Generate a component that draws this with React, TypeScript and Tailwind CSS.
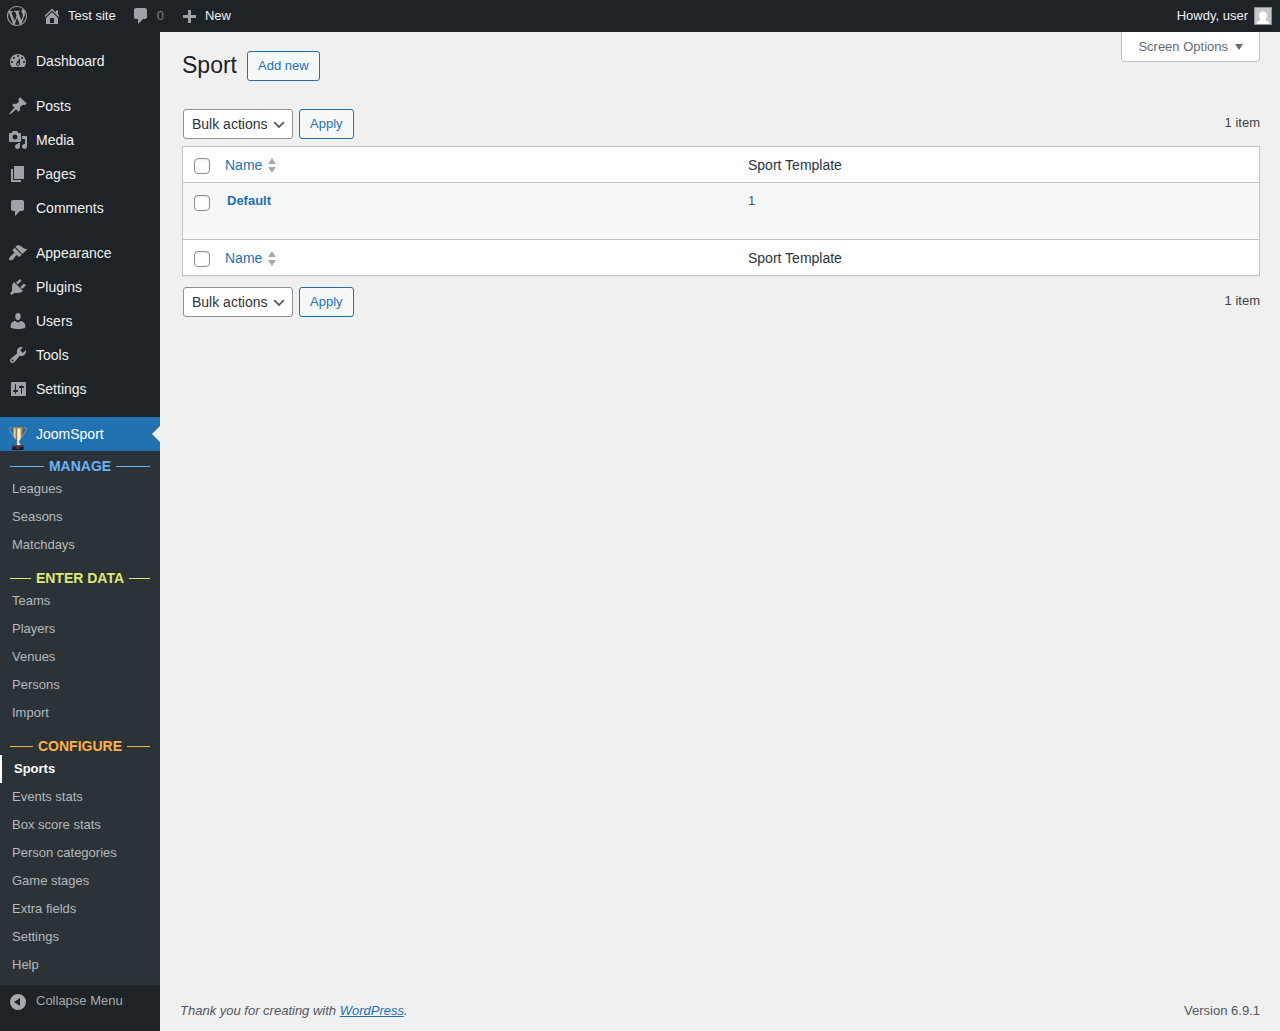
import type { ReactNode } from 'react';

const icons = {
  wordpress:
    'M20 10c0-5.51-4.49-10-10-10C4.48 0 0 4.49 0 10c0 5.52 4.48 10 10 10 5.51 0 10-4.48 10-10zM7.78 15.37L4.37 6.22c.55-.02 1.17-.08 1.17-.08.5-.06.44-1.13-.06-1.11 0 0-1.45.11-2.37.11-.18 0-.37 0-.58-.01C4.12 2.69 6.87 1.11 10 1.11c2.33 0 4.45.87 6.05 2.34-.68-.11-1.65.39-1.65 1.58 0 .74.45 1.36.9 2.1.35.61.55 1.36.55 2.46 0 1.49-1.4 5-1.4 5l-3.03-8.37c.54-.02.82-.17.82-.17.5-.05.44-1.25-.06-1.22 0 0-1.44.12-2.38.12-.87 0-2.33-.12-2.33-.12-.5-.03-.56 1.2-.06 1.22l.92.08 1.26 3.41zM17.41 10c.24-.64.74-1.87.43-4.25.7 1.29 1.05 2.71 1.05 4.25 0 3.29-1.73 6.24-4.4 7.78.97-2.59 1.94-5.2 2.92-7.78zM6.1 18.09C3.12 16.65 1.11 13.53 1.11 10c0-1.3.23-2.48.72-3.59C3.25 10.3 4.67 14.2 6.1 18.09zm4.03-6.63l2.58 6.98c-.86.29-1.76.45-2.71.45-.79 0-1.57-.11-2.29-.33.81-2.38 1.62-4.74 2.42-7.1z',
  home: 'M16 8.5l1.53 1.53-1.06 1.06L10 4.6l-6.47 6.49-1.06-1.06L10 2.5l4 4v-2h2v4zm-6-2.46l6 5.99V18H4v-5.97zM12 17v-5H8v5h4z',
  plus: 'M17 9v3h-5v5H9v-5H4V9h5V4h3v5h5z',
  dashboard:
    'M3.76 16h12.48c1.1-1.37 1.76-3.11 1.76-5 0-4.42-3.58-8-8-8s-8 3.58-8 8c0 1.89.66 3.63 1.76 5zM10 4c.55 0 1 .45 1 1s-.45 1-1 1-1-.45-1-1 .45-1 1-1zM6 6c.55 0 1 .45 1 1s-.45 1-1 1-1-.45-1-1 .45-1 1-1zm8 0c.55 0 1 .45 1 1s-.45 1-1 1-1-.45-1-1 .45-1 1-1zm-5.37 5.55L12 7v6c0 1.1-.9 2-2 2s-2-.9-2-2c0-.57.24-1.08.63-1.45zM4 10c.55 0 1 .45 1 1s-.45 1-1 1-1-.45-1-1 .45-1 1-1zm12 0c.55 0 1 .45 1 1s-.45 1-1 1-1-.45-1-1 .45-1 1-1zm-5 3c0-.55-.45-1-1-1s-1 .45-1 1 .45 1 1 1 1-.45 1-1z',
  post: 'M10.44 3.02l1.82-1.82 6.36 6.35-1.83 1.82c-1.05-.68-2.48-.57-3.41.36l-.75.75c-.92.93-1.04 2.35-.35 3.41l-1.83 1.82-2.41-2.41-2.8 2.79c-.42.42-3.38 2.71-3.8 2.29s1.86-3.39 2.28-3.81l2.79-2.79L4.1 9.36l1.83-1.82c1.05.69 2.48.57 3.4-.36l.75-.75c.93-.92 1.05-2.35.36-3.41z',
  media:
    'M13 11V4c0-.55-.45-1-1-1h-1.67L9 1H5L3.67 3H2c-.55 0-1 .45-1 1v7c0 .55.45 1 1 1h10c.55 0 1-.45 1-1zM7 4.5c1.38 0 2.5 1.12 2.5 2.5S8.38 9.5 7 9.5 4.5 8.38 4.5 7 5.62 4.5 7 4.5zM14 6h5v10.5c0 1.38-1.12 2.5-2.5 2.5S14 17.88 14 16.5s1.12-2.5 2.5-2.5c.17 0 .34.02.5.05V9h-3V6zm-4 8.05V13h2v3.5c0 1.38-1.12 2.5-2.5 2.5S7 17.88 7 16.5 8.12 14 9.5 14c.17 0 .34.02.5.05z',
  page: 'M6 15V2h10v13H6zm-1 1h8v2H3V5h2v11z',
  comment: 'M5 2h9c1.1 0 2 .9 2 2v7c0 1.1-.9 2-2 2h-2l-5 5v-5H5c-1.1 0-2-.9-2-2V4c0-1.1.9-2 2-2z',
  appearance:
    'M14.48 11.06L7.41 3.99l1.5-1.5c.5-.56 2.3-.47 3.51.32 1.21.8 1.43 1.28 2.91 2.1 1.18.64 2.45 1.26 4.45.85zm-.71.71L6.7 4.7 4.93 6.47c-.39.39-.39 1.02 0 1.41l1.06 1.06c.39.39.39 1.03 0 1.42-.6.6-1.43 1.11-2.21 1.69-.35.26-.7.53-1.01.84C1.43 14.23.4 16.08 1.4 17.07c.99 1 2.84-.03 4.18-1.36.31-.31.58-.66.85-1.02.57-.78 1.08-1.61 1.69-2.21.39-.39 1.02-.39 1.41 0l1.06 1.06c.39.39 1.02.39 1.41 0z',
  plugins:
    'M13.11 4.36L9.87 7.6 8 5.73l3.24-3.24c.35-.34 1.05-.2 1.56.32.52.51.66 1.21.31 1.55zm-8 1.77l.91-1.12 9.01 9.01-1.19.84c-.71.71-2.63 1.16-3.82 1.16H6.14L4.9 17.26c-.59.59-1.54.59-2.12 0-.59-.58-.59-1.53 0-2.12l1.24-1.24v-3.88c0-1.13.4-3.19 1.09-3.89zm7.26 3.97l3.24-3.24c.34-.35 1.04-.21 1.55.31.52.51.66 1.21.31 1.55l-3.24 3.25z',
  users:
    'M10 9.25c-2.27 0-2.73-3.44-2.73-3.44C7 4.02 7.82 2 9.97 2c2.16 0 2.98 2.02 2.71 3.81 0 0-.41 3.44-2.68 3.44zm0 2.57L12.72 10c2.39 0 4.52 2.33 4.52 4.53v2.49s-3.65 1.13-7.24 1.13c-3.65 0-7.24-1.13-7.24-1.13v-2.49c0-2.25 1.94-4.48 4.47-4.48z',
  tools:
    'M16.68 9.77c-1.34 1.34-3.3 1.67-4.95.99l-5.41 6.52c-.99.99-2.59.99-3.58 0s-.99-2.59 0-3.57l6.52-5.42c-.68-1.65-.35-3.61.99-4.95 1.28-1.28 3.12-1.62 4.72-1.06l-2.89 2.89 2.82 2.82 2.86-2.87c.53 1.58.18 3.39-1.08 4.65zM3.81 16.21c.4.39 1.04.39 1.43 0 .4-.4.4-1.04 0-1.43-.39-.4-1.03-.4-1.43 0-.39.39-.39 1.03 0 1.43z',
  settings:
    'M18 16V4c0-.55-.45-1-1-1H4c-.55 0-1 .45-1 1v12c0 .55.45 1 1 1h13c.55 0 1-.45 1-1zM8 11h1c.55 0 1 .45 1 1s-.45 1-1 1H8v1.5c0 .28-.22.5-.5.5s-.5-.22-.5-.5V13H6c-.55 0-1-.45-1-1s.45-1 1-1h1V5.5c0-.28.22-.5.5-.5s.5.22.5.5V11zm5-2h-1c-.55 0-1-.45-1-1s.45-1 1-1h1v-.5c0-.28.22-.5.5-.5s.5.22.5.5V7h1c.55 0 1 .45 1 1s-.45 1-1 1h-1v5.5c0 .28-.22.5-.5.5s-.5-.22-.5-.5V9z',
  collapse: 'M10 2a8 8 0 1 0 0 16 8 8 0 0 0 0-16zm2 4v8l-6-4z',
};

type IconName = keyof typeof icons;

const Icon = ({ name }: { name: IconName }) => (
  <svg className="w-5 h-5 shrink-0" viewBox="0 0 20 20" fill="currentColor" fillRule="evenodd" aria-hidden="true">
    <path d={icons[name]} />
  </svg>
);

const Trophy = () => (
  <svg className="w-5 h-6 shrink-0" viewBox="0 0 20 24" aria-hidden="true">
    <defs>
      <linearGradient id="cup">
        <stop offset="0" stopColor="#5d5747" />
        <stop offset="0.2" stopColor="#e9dfc4" />
        <stop offset="0.36" stopColor="#8f7440" />
        <stop offset="0.48" stopColor="#f7edca" />
        <stop offset="0.65" stopColor="#fff9e6" />
        <stop offset="0.82" stopColor="#a58748" />
        <stop offset="1" stopColor="#5b5440" />
      </linearGradient>
    </defs>
    <path
      d="M5 1.500C2.500-.2 1 .2 1.500 2.400c.5 2.300 3 4.600 4.400 8.100M15 1.500c2.500-1.700 4-1.300 3.500.9-.5 2.300-3 4.600-4.400 8.100"
      fill="none"
      stroke="#8f9a98"
    />
    <path d="M4.500 0h11c.2 6-1.100 11.200-4.300 13.500v2.200l1.800 2.800H7l1.800-2.800v-2.200C5.600 11.200 4.300 6 4.500 0z" fill="url(#cup)" />
    <ellipse cx="10" cy="0.800" rx="5.500" ry="0.800" fill="#8c8163" />
    <path d="M4.500 18.500h11v4.500H4z" fill="#211619" />
    <path d="M5 19h10v1H5z" fill="#61333a" />
    <path d="M8 20.500h4v1H8z" fill="#7b4b3b" />
  </svg>
);

const menu: { label: string; icon: IconName }[][] = [
  [{ label: 'Dashboard', icon: 'dashboard' }],
  [
    { label: 'Posts', icon: 'post' },
    { label: 'Media', icon: 'media' },
    { label: 'Pages', icon: 'page' },
    { label: 'Comments', icon: 'comment' },
  ],
  [
    { label: 'Appearance', icon: 'appearance' },
    { label: 'Plugins', icon: 'plugins' },
    { label: 'Users', icon: 'users' },
    { label: 'Tools', icon: 'tools' },
    { label: 'Settings', icon: 'settings' },
  ],
];

const submenu = [
  { title: 'MANAGE', color: 'text-[#68b4f8]', items: ['Leagues', 'Seasons', 'Matchdays'] },
  { title: 'ENTER DATA', color: 'text-[#dfe873]', items: ['Teams', 'Players', 'Venues', 'Persons', 'Import'] },
  {
    title: 'CONFIGURE',
    color: 'text-[#ffb046]',
    items: ['Sports', 'Events stats', 'Box score stats', 'Person categories', 'Game stages', 'Extra fields', 'Settings', 'Help'],
  },
];

const AdminBar = () => (
  <header className="flex h-8 items-center justify-between bg-[#1d2327] pr-2 text-[#f0f0f1]">
    <nav className="flex items-center" aria-label="Toolbar">
      <a href="#" aria-label="About WordPress" className="px-[7px] text-[#9ca2a7]">
        <Icon name="wordpress" />
      </a>
      <a href="#" className="flex items-center gap-1.5 pr-[7px] pl-2">
        <span className="text-[#9ca2a7]"><Icon name="home" /></span>
        Test site
      </a>
      <a href="#" aria-label="0 Comments in moderation" className="flex items-center gap-1.5 pr-[7px] pl-2 text-[#9ca2a7]">
        <Icon name="comment" />
        <span className="text-[#7d8286]">0</span>
      </a>
      <a href="#" className="flex items-center gap-1.5 px-2">
        <span className="text-[#9ca2a7]"><Icon name="plus" /></span>
        New
      </a>
    </nav>
    <a href="#" className="flex items-center gap-1.5">
      Howdy, user
      <svg className="h-[18px] w-[18px]" viewBox="0 0 18 18" aria-hidden="true">
        <path d="M0 0h18v18H0z" fill="#8c8f94" />
        <path d="M1 1h16v16H1z" fill="#c6c6c8" />
        <path d="M9 4.500c2.500 0 4 1.900 4 4.300 0 1.600-.7 3-1.700 3.800.3 1.300 3.700 1.300 4.200 4.400h-13c.5-3.100 3.900-3.100 4.200-4.400-1-.8-1.700-2.200-1.700-3.800 0-2.400 1.500-4.300 4-4.300z" fill="#fff" />
      </svg>
    </a>
  </header>
);

const Sidebar = () => (
  <nav className="w-40 shrink-0 bg-[#1d2327] pt-3 text-sm text-[#f0f0f1]" aria-label="Main menu">
    <div className="flex flex-col gap-[11px]">
      {menu.map((group) => (
        <ul key={group[0].label}>
          {group.map((item) => (
            <li key={item.label}>
              <a href="#" className="flex h-[34px] items-center gap-2 pl-2 hover:text-[#72aee6]">
                <span className="text-[#9ca2a7]"><Icon name={item.icon} /></span>
                {item.label}
              </a>
            </li>
          ))}
        </ul>
      ))}

      <div>
        <a href="#" className="relative flex h-[34px] items-center gap-2 bg-[#2271b1] pl-2 text-white">
          <span className="self-end"><Trophy /></span>
          JoomSport
          {/* Notch pointing at the current page */}
          <span className="absolute top-1/2 right-0 -translate-y-1/2 border-8 border-l-0 border-transparent border-r-[#f0f0f1]" />
        </a>
        <div className="flex flex-col gap-2.5 bg-[#2c3338] py-1.5 text-[13px]">
          {submenu.map((group) => (
            <section key={group.title}>
              <h2 className={`flex items-center gap-[5px] px-2.5 text-sm leading-[18px] font-bold ${group.color}`}>
                <span className="h-px flex-1 bg-current" />
                {group.title}
                <span className="h-px flex-1 bg-current" />
              </h2>
              <ul>
                {group.items.map((item) => (
                  <li key={item}>
                    <a
                      href="#"
                      className={
                        item === 'Sports'
                          ? 'flex h-7 items-center border-l-2 border-white pl-3 font-bold text-white'
                          : 'flex h-7 items-center pl-3 text-[#b5b9bd] hover:text-[#72aee6]'
                      }
                    >
                      {item}
                    </a>
                  </li>
                ))}
              </ul>
            </section>
          ))}
        </div>
        <button type="button" className="flex h-[34px] w-full items-center gap-2 pl-2 text-[13px] text-[#a7aaad]">
          <Icon name="collapse" />
          <span className="pb-0.5">Collapse Menu</span>
        </button>
      </div>
    </div>
  </nav>
);

const OutlineButton = ({ children }: { children: ReactNode }) => (
  <button type="button" className="h-[30px] rounded-[3px] border border-[#2271b1] bg-[#f6f7f7] px-2.5 text-[#2271b1]">
    {children}
  </button>
);

const TableNav = () => (
  <div className="flex items-center justify-between pl-px">
    <div className="flex gap-1.5">
      <div className="relative">
        <select
          aria-label="Select bulk action"
          className="h-[30px] w-[110px] appearance-none rounded-[3px] border border-[#8c8f94] bg-white pl-2 text-sm text-[#2c3338]"
        >
          <option>Bulk actions</option>
          <option>Edit</option>
          <option>Move to Trash</option>
        </select>
        <svg className="pointer-events-none absolute top-2 right-1.5 h-4 w-4" viewBox="0 0 20 20" aria-hidden="true">
          <path d="M5 6l5 5 5-5 2 1-7 7-7-7 2-1z" fill="#555" />
        </svg>
      </div>
      <OutlineButton>Apply</OutlineButton>
    </div>
    <span className="pb-0.5">1 item</span>
  </div>
);

const Checkbox = ({ label }: { label: string }) => (
  <input
    type="checkbox"
    aria-label={label}
    className="block h-4 w-4 appearance-none rounded-[4px] border border-[#8c8f94] bg-white shadow-[inset_0_1px_2px_rgba(0,0,0,0.1)] checked:bg-[#2271b1]"
  />
);

const HeadingRow = ({ border }: { border: string }) => (
  <tr className="h-9 bg-white text-left text-sm text-[#2c3338]">
    <td className={`border-[#c3c4c7] pt-[3px] pl-[11px] ${border}`}><Checkbox label="Select All" /></td>
    <th scope="col" className={`border-[#c3c4c7] px-2.5 font-normal ${border}`}>
      <a href="#" className="flex items-center gap-1.5 text-[#2271b1]">
        Name
        <svg className="h-4 w-2" viewBox="0 0 8 16" fill="#a7aaad" aria-hidden="true">
          <path d="M4 1l4 6H0zM0 10h8l-4 6z" />
        </svg>
      </a>
    </th>
    <th scope="col" className={`border-[#c3c4c7] px-[11px] font-normal ${border}`}>Sport Template</th>
  </tr>
);

const App = () => (
  <div className="flex min-h-screen flex-col bg-[#f0f0f1] font-['Liberation_Sans',Arial,sans-serif] text-[13px] leading-[18px] text-[#3c434a]">
    <AdminBar />
    <div className="flex flex-1">
      <Sidebar />
      <div className="flex min-w-0 flex-1 flex-col pr-5">
        <main className="flex-1 pl-[22px]">
          <div className="flex items-start justify-between">
            <div className="flex items-start gap-2.5 pt-[19px]">
              <h1 className="text-[23px] leading-7 text-[#1d2327]">Sport</h1>
              <OutlineButton>Add new</OutlineButton>
            </div>
            <button
              type="button"
              className="flex h-[30px] items-center gap-[7px] rounded-b border border-t-0 border-[#c3c4c7] bg-white px-4 text-[#646970]"
            >
              Screen Options
              <svg className="h-2 w-2" viewBox="0 0 8 8" fill="currentColor" aria-hidden="true">
                <path d="M0 1h8L4 7z" />
              </svg>
            </button>
          </div>

          <div className="flex flex-col pt-7">
            <TableNav />
            <div className="mt-[7px] mb-[11px] border border-[#c3c4c7] shadow-[0_1px_1px_rgba(0,0,0,0.04)]">
              <table className="w-full table-fixed border-separate border-spacing-0">
                <colgroup>
                  <col className="w-8" />
                  <col />
                  <col />
                </colgroup>
                <thead>
                  <HeadingRow border="border-b" />
                </thead>
                <tbody>
                  <tr className="h-14 bg-[#f6f7f7] align-top text-[#50575e]">
                    <td className="pt-3 pl-[11px]"><Checkbox label="Select Default" /></td>
                    <td className="px-3 pt-[9px]">
                      <a href="#" className="font-bold text-[#2271b1]">Default</a>
                    </td>
                    <td className="px-[11px] pt-[9px]">1</td>
                  </tr>
                </tbody>
                <tfoot>
                  <HeadingRow border="border-t" />
                </tfoot>
              </table>
            </div>
            <TableNav />
          </div>
        </main>

        <footer className="flex justify-between pb-[11px] pl-5 text-[#50575e]">
          <p className="italic">
            Thank you for creating with <a href="#" className="text-[#2271b1] underline">WordPress</a>.
          </p>
          <p>Version 6.9.1</p>
        </footer>
      </div>
    </div>
  </div>
);

export default App;
